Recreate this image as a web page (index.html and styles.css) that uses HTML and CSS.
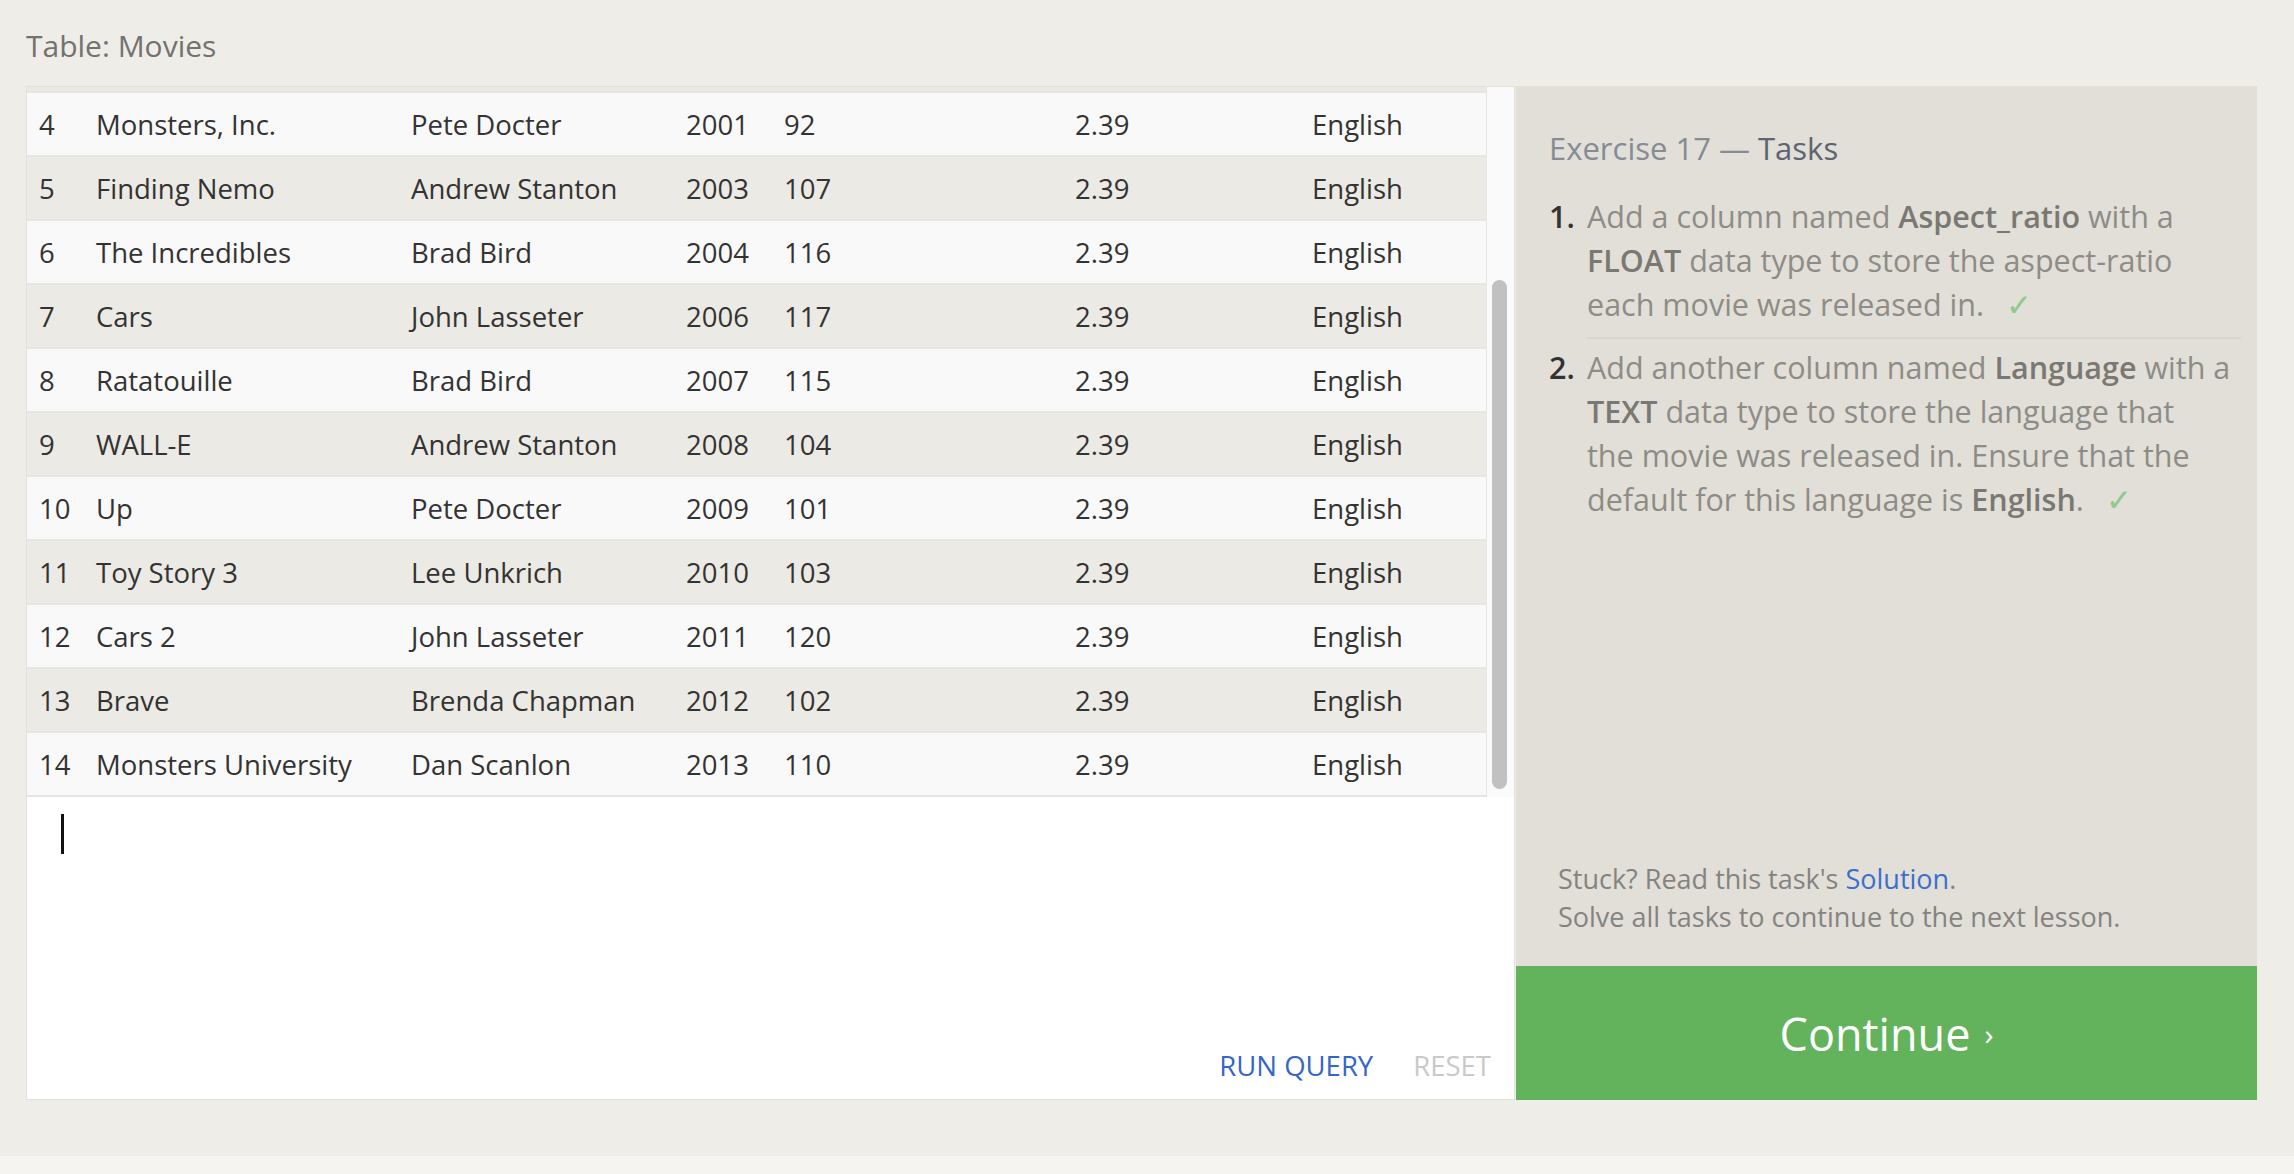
FILE: index.html
```html
<!DOCTYPE html>
<html lang="en">
<head>
<meta charset="utf-8">
<title>SQL Lesson – Table: Movies</title>
<link rel="stylesheet" href="styles.css">
</head>
<body>
<div class="page">
  <div class="table-title">Table: Movies</div>
  <div class="main">
    <section class="left">
      <div class="results">
        <div class="rows">
          <div class="sliver"></div>
          <div class="row odd"><span>4</span><span>Monsters, Inc.</span><span>Pete Docter</span><span>2001</span><span>92</span><span>2.39</span><span>English</span></div>
          <div class="row even"><span>5</span><span>Finding Nemo</span><span>Andrew Stanton</span><span>2003</span><span>107</span><span>2.39</span><span>English</span></div>
          <div class="row odd"><span>6</span><span>The Incredibles</span><span>Brad Bird</span><span>2004</span><span>116</span><span>2.39</span><span>English</span></div>
          <div class="row even"><span>7</span><span>Cars</span><span>John Lasseter</span><span>2006</span><span>117</span><span>2.39</span><span>English</span></div>
          <div class="row odd"><span>8</span><span>Ratatouille</span><span>Brad Bird</span><span>2007</span><span>115</span><span>2.39</span><span>English</span></div>
          <div class="row even"><span>9</span><span>WALL-E</span><span>Andrew Stanton</span><span>2008</span><span>104</span><span>2.39</span><span>English</span></div>
          <div class="row odd"><span>10</span><span>Up</span><span>Pete Docter</span><span>2009</span><span>101</span><span>2.39</span><span>English</span></div>
          <div class="row even"><span>11</span><span>Toy Story 3</span><span>Lee Unkrich</span><span>2010</span><span>103</span><span>2.39</span><span>English</span></div>
          <div class="row odd"><span>12</span><span>Cars 2</span><span>John Lasseter</span><span>2011</span><span>120</span><span>2.39</span><span>English</span></div>
          <div class="row even"><span>13</span><span>Brave</span><span>Brenda Chapman</span><span>2012</span><span>102</span><span>2.39</span><span>English</span></div>
          <div class="row odd"><span>14</span><span>Monsters University</span><span>Dan Scanlon</span><span>2013</span><span>110</span><span>2.39</span><span>English</span></div>
        </div>
        <div class="gutter"><div class="thumb"></div></div>
      </div>
      <div class="editor">
        <div class="cursor"></div>
        <div class="actions">
          <span class="run">RUN QUERY</span>
          <span class="reset">RESET</span>
        </div>
      </div>
    </section>
    <aside class="right">
      <div class="tasks">
        <h2 class="heading"><span class="ex">Exercise 17 —</span> <span class="tk">Tasks</span></h2>
        <ol class="list">
          <li><span class="num">1.</span><div class="txt">Add a column named <b>Aspect_ratio</b> with a<br><b>FLOAT</b> data type to store the aspect-ratio<br>each movie was released in. <span class="check">✓</span></div></li>
          <li><span class="num">2.</span><div class="txt">Add another column named <b>Language</b> with a<br><b>TEXT</b> data type to store the language that<br>the movie was released in. Ensure that the<br>default for this language is <b>English</b>. <span class="check">✓</span></div></li>
        </ol>
      </div>
      <div class="stuck">
        <p>Stuck? Read this task's <a class="solution">Solution</a>.</p>
        <p>Solve all tasks to continue to the next lesson.</p>
      </div>
      <div class="continue">Continue <span class="chev">›</span></div>
    </aside>
  </div>
  <div class="footer"></div>
</div>
</body>
</html>
```
FILE: styles.css
```css
html, body {
  margin: 0;
  padding: 0;
}
body {
  background: #efede7;
  font-family: "Open Sans", "Noto Sans", sans-serif;
  color: #383838;
}
.page {
  width: 2294px;
  height: 1174px;
  display: flex;
  flex-direction: column;
}
.table-title {
  height: 86px;
  box-sizing: border-box;
  padding: 26px 0 0 26px;
  font-size: 30px;
  line-height: 40px;
  color: #737270;
}
.main {
  display: flex;
  margin-left: 26px;
  height: 1014px;
  gap: 1px;
}
.left {
  width: 1489px;
  box-sizing: border-box;
  border: 1px solid #e3e1da;
  display: flex;
  flex-direction: column;
  background: #fff;
}
.results {
  display: flex;
  height: 710px;
}
.rows {
  width: 1459px;
}
.sliver {
  height: 4px;
  background: #ebe9e3;
}
.row {
  display: grid;
  grid-template-columns: 57px 315px 275px 98px 291px 237px 1fr;
  padding-left: 12px;
  height: 64px;
  box-sizing: border-box;
  border-top: 2px solid #e6e5e0;
  align-items: center;
  font-size: 27.5px;
  color: #333333;
}
.row span { white-space: nowrap; }
.row.odd { background: #f9f9f9; }
.row.even { background: #ebeae4; }
.row:last-child { border-bottom: 2px solid #e6e5e0; height: 66px; }
.gutter {
  width: 28px;
  box-sizing: border-box;
  background: #fafafa;
  border-left: 1px solid #e6e6e6;
  padding: 193px 0 0 5px;
}
.thumb {
  width: 15px;
  height: 509px;
  border-radius: 8px;
  background: #c1c1c1;
}
.editor {
  flex: 1;
  background: #fff;
  display: flex;
  flex-direction: column;
  justify-content: space-between;
  padding: 17px 23px 15px 34px;
}
.cursor {
  width: 3px;
  height: 40px;
  background: #111;
}
.actions {
  display: flex;
  justify-content: flex-end;
  gap: 40px;
  font-size: 27.5px;
  line-height: 36px;
}
.run { color: #3566c8; }
.reset { color: #c9c9c9; }
.right {
  width: 741px;
  background: #e1dfd7;
  display: flex;
  flex-direction: column;
}
.tasks {
  flex: 1;
  padding: 40px 16px 0 33px;
}
.heading {
  margin: 0;
  font-weight: normal;
  font-size: 31px;
  line-height: 44px;
}
.ex { color: #868b94; }
.tk { color: #5e6472; }
.list {
  list-style: none;
  margin: 24px 0 0 0;
  padding: 0;
  font-size: 30.5px;
  line-height: 44px;
  color: #8e8c86;
}
.list li {
  display: flex;
}
.num {
  width: 38px;
  flex: none;
  color: #333;
  font-weight: 600;
}
.txt {
  flex: 1;
  white-space: nowrap;
  padding-bottom: 11px;
}
.list li + li .txt {
  padding-top: 6px;
}
.list li:first-child .txt {
  border-bottom: 2px solid #d8d6cf;
}
.list li + li .num {
  padding-top: 6px;
}
.list b {
  color: #7a7872;
  font-weight: 600;
}
.check {
  color: #8fc98d;
  margin-left: 14px;
}
.stuck {
  padding: 0 0 30px 42px;
  font-size: 27px;
  line-height: 38px;
  color: #858380;
}
.stuck p { margin: 0; }
.solution { color: #3b6fcf; }
.continue {
  height: 134px;
  background: #62b35b;
  color: #fff;
  font-size: 45px;
  display: flex;
  align-items: center;
  justify-content: center;
  gap: 14px;
}
.chev { font-size: 30px; }
.footer {
  margin-top: auto;
  height: 18px;
  background: #f5f4f0;
}
```
